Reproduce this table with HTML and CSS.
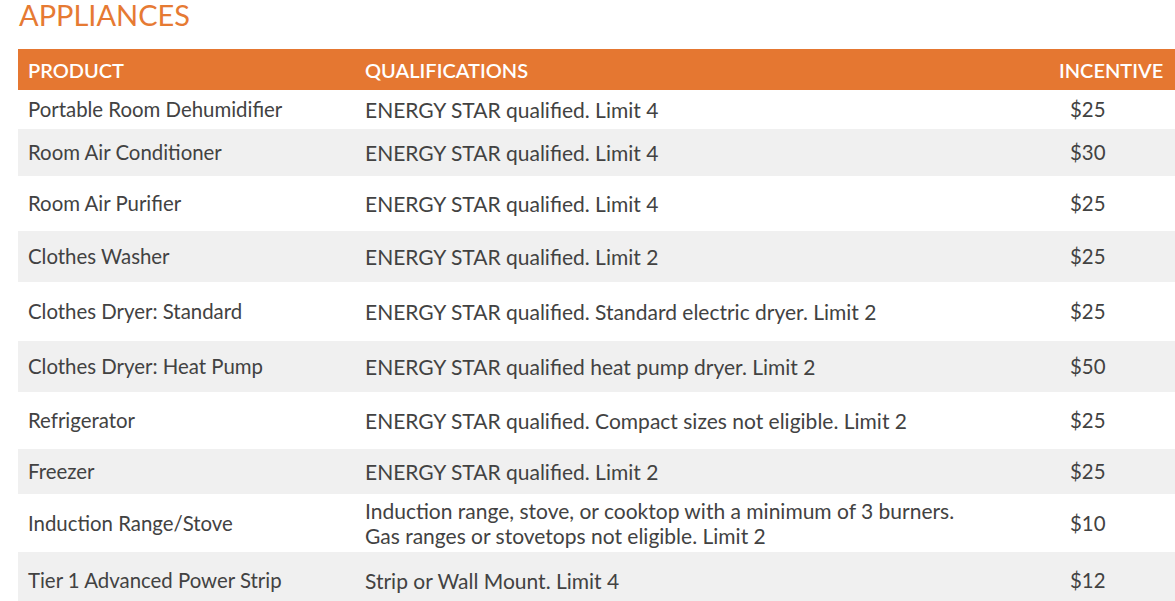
FILE: index.html
```html
<!DOCTYPE html>
<html lang="en">
<head>
<meta charset="utf-8">
<title>Appliances</title>
<link rel="stylesheet" href="styles.css">
</head>
<body>
<section class="section">
  <h2 class="title">APPLIANCES</h2>
  <table class="rebates">
    <thead>
      <tr>
        <th class="col-product">PRODUCT</th>
        <th class="col-qual">QUALIFICATIONS</th>
        <th class="col-inc">INCENTIVE</th>
      </tr>
    </thead>
    <tbody>
      <tr class="r1"><td>Portable Room Dehumidifier</td><td class="qual">ENERGY STAR qualified. Limit 4</td><td class="amt">$25</td></tr>
      <tr class="r2"><td>Room Air Conditioner</td><td class="qual">ENERGY STAR qualified. Limit 4</td><td class="amt">$30</td></tr>
      <tr class="r3"><td>Room Air Purifier</td><td class="qual">ENERGY STAR qualified. Limit 4</td><td class="amt">$25</td></tr>
      <tr class="r4"><td>Clothes Washer</td><td class="qual">ENERGY STAR qualified. Limit 2</td><td class="amt">$25</td></tr>
      <tr class="r5"><td>Clothes Dryer: Standard</td><td class="qual">ENERGY STAR qualified. Standard electric dryer. Limit 2</td><td class="amt">$25</td></tr>
      <tr class="r6"><td>Clothes Dryer: Heat Pump</td><td class="qual">ENERGY STAR qualified heat pump dryer. Limit 2</td><td class="amt">$50</td></tr>
      <tr class="r7"><td>Refrigerator</td><td class="qual">ENERGY STAR qualified. Compact sizes not eligible. Limit 2</td><td class="amt">$25</td></tr>
      <tr class="r8"><td>Freezer</td><td class="qual">ENERGY STAR qualified. Limit 2</td><td class="amt">$25</td></tr>
      <tr class="r9"><td>Induction Range/Stove</td><td class="qual">Induction range, stove, or cooktop with a minimum of 3 burners.<br>Gas ranges or stovetops not eligible. Limit 2</td><td class="amt">$10</td></tr>
      <tr class="r10"><td>Tier 1 Advanced Power Strip</td><td class="qual">Strip or Wall Mount. Limit 4</td><td class="amt">$12</td></tr>
    </tbody>
  </table>
</section>
</body>
</html>
```
FILE: styles.css
```css
html, body {
  margin: 0;
  padding: 0;
  background: #ffffff;
  overflow: hidden;
}
body {
  font-family: Lato, "Open Sans", sans-serif;
  color: #424242;
}
.section {
  padding-left: 18px;
}
.title {
  margin: 0 0 19px 1px;
  font-size: 29px;
  line-height: 30px;
  font-weight: 400;
  color: #e67a33;
}
.rebates {
  border-collapse: collapse;
  width: 1160px;
  table-layout: fixed;
}
.rebates th {
  background: #e57731;
  color: #ffffff;
  font-size: 20px;
  font-weight: 600;
  text-align: left;
  height: 41px;
  padding: 0 0 0 10px;
  box-sizing: border-box;
  vertical-align: middle;
}
.col-product { width: 337px; }
.col-qual { width: 694px; }
.col-inc { width: 129px; }
.rebates td {
  font-size: 20.4px;
  line-height: 25px;
  padding: 0 0 0 10px;
  vertical-align: middle;
  box-sizing: border-box;
}
.rebates td.qual {
  font-size: 21px;
}
.rebates td.amt {
  font-size: 20.4px;
  padding-left: 21px;
}
.rebates tbody tr:nth-child(even) td {
  background: #f0f0f0;
}
.r1 td { height: 39px; }
.r2 td { height: 47px; }
.r3 td { height: 55px; }
.r4 td { height: 51px; }
.r5 td { height: 59px; }
.r6 td { height: 51px; }
.r7 td { height: 57px; }
.r8 td { height: 45px; }
.r9 td { height: 58px; }
.r10 td { height: 57px; }
```
